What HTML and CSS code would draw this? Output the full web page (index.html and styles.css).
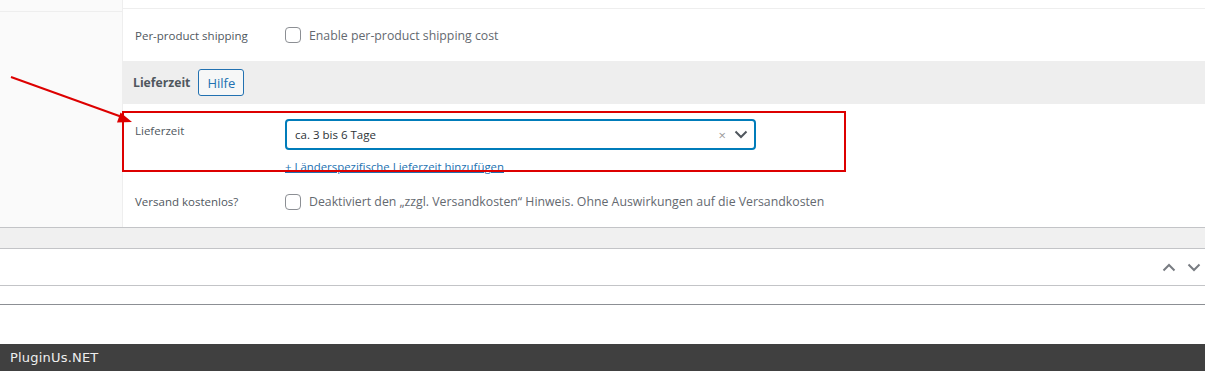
FILE: index.html
```html
<!DOCTYPE html>
<html lang="de">
<head>
<meta charset="utf-8">
<title>Lieferzeit</title>
<link rel="stylesheet" href="styles.css">
</head>
<body>
<div class="page">
  <div class="panel">
    <div class="tabs">
      <div class="tab-item"></div>
    </div>
    <div class="content">
      <div class="top-strip"></div>
      <div class="row row-ship">
        <div class="label">Per-product shipping</div>
        <div class="field">
          <label class="check"><span class="box"></span><span class="desc">Enable per-product shipping cost</span></label>
        </div>
      </div>
      <div class="section-head">
        <span class="section-title">Lieferzeit</span>
        <span class="help-btn">Hilfe</span>
      </div>
      <div class="row row-delivery">
        <div class="label label-top">Lieferzeit</div>
        <div class="field field-col">
          <div class="select">
            <span class="select-value">ca. 3 bis 6 Tage</span>
            <span class="select-clear">×</span>
            <svg class="select-arrow" width="14" height="9" viewBox="0 0 14 9"><path d="M1.5 1.5 L7 7 L12.5 1.5" fill="none" stroke="#50575e" stroke-width="2"/></svg>
          </div>
          <a class="add-link" href="#">+ Länderspezifische Lieferzeit hinzufügen</a>
        </div>
      </div>
      <div class="row row-free">
        <div class="label">Versand kostenlos?</div>
        <div class="field">
          <label class="check"><span class="box"></span><span class="desc">Deaktiviert den „zzgl. Versandkosten“ Hinweis. Ohne Auswirkungen auf die Versandkosten</span></label>
        </div>
      </div>
    </div>
  </div>
  <div class="gray-band"></div>
  <div class="postbox-head">
    <svg class="handle" width="14" height="9" viewBox="0 0 14 9"><path d="M1.5 7.5 L7 2 L12.5 7.5" fill="none" stroke="#787c82" stroke-width="2"/></svg>
    <svg class="handle" width="14" height="9" viewBox="0 0 14 9"><path d="M1.5 1.5 L7 7 L12.5 1.5" fill="none" stroke="#787c82" stroke-width="2"/></svg>
  </div>
  <div class="thin-row"></div>
  <div class="spacer"></div>
  <div class="footer">PluginUs.NET</div>

  <div class="highlight"></div>
  <svg class="arrow" width="140" height="130" viewBox="0 0 140 130">
    <line x1="11" y1="77" x2="122" y2="117" stroke="#dd0000" stroke-width="2"/>
    <polygon points="132,122 120.5,112.5 117,122.5" fill="#dd0000"/>
  </svg>
</div>
</body>
</html>
```

FILE: styles.css
```css
* { box-sizing: border-box; }
html, body { margin: 0; padding: 0; background: #fff; }
body {
  font-family: "Open Sans", "Noto Sans", sans-serif;
  font-size: 13px;
  color: #50575e;
}
.page { position: relative; width: 1205px; height: 371px; overflow: hidden; }

.panel {
  display: flex;
  height: 228px;
  border-bottom: 1px solid #c3c4c7;
}
.tabs {
  width: 123px;
  background: #fafafa;
  border-right: 1px solid #eee;
}
.tab-item { height: 12px; border-bottom: 1px solid #eee; }
.content { flex: 1; display: flex; flex-direction: column; }
.top-strip { height: 9px; border-bottom: 1px solid #eee; }

.row { display: flex; padding: 0 12px; }
.label { width: 150px; flex: none; color: #50575e; font-size: 11.5px; }
.field { flex: 1; }

.row-ship { height: 52px; align-items: center; }
.row-free { height: 51px; align-items: center; }

.check { display: flex; align-items: center; gap: 8px; }
.box {
  width: 16px; height: 16px;
  border: 1px solid #8c8f94;
  border-radius: 4px;
  background: #fff;
  flex: none;
}
.desc { color: #646970; font-size: 12.3px; }

.section-head {
  height: 43px;
  background: #eeeeee;
  display: flex;
  align-items: center;
  padding-left: 10px;
  gap: 8px;
}
.section-title { font-weight: 700; color: #50575e; font-size: 12.2px; }
.help-btn {
  height: 27px;
  padding: 0 8px;
  border: 1px solid #2271b1;
  border-radius: 3px;
  background: #f6f7f7;
  color: #2271b1;
  display: flex;
  align-items: center;
}

.row-delivery { padding-top: 15px; }
.label-top { padding-top: 2px; line-height: 20px; }
.field-col { display: flex; flex-direction: column; align-items: flex-start; }
.select {
  width: 471px;
  height: 31px;
  border: 2px solid #007cba;
  border-radius: 4px;
  display: flex;
  align-items: center;
  padding: 0 6px 0 8px;
  color: #2c3338;
  font-size: 11.5px;
}
.select-value { flex: 1; }
.select-clear { color: #999; font-size: 13px; margin-right: 8px; }
.select-arrow { display: block; }
.add-link {
  margin-top: 8px;
  line-height: 18px;
  color: #2271b1;
  text-decoration: underline;
  font-size: 11.4px;
}

.gray-band {
  height: 21px;
  background: #f0f0f0;
  border-bottom: 1px solid #c3c4c7;
}
.postbox-head {
  height: 37px;
  border-bottom: 1px solid #c3c4c7;
  display: flex;
  justify-content: flex-end;
  align-items: center;
  gap: 11px;
  padding-right: 4px;
}
.handle { display: block; }
.thin-row { height: 19px; border-bottom: 1px solid #8c8f94; }
.spacer { height: 39px; }
.footer {
  height: 28px;
  background: #404040;
  color: #eeeeee;
  font-family: "DejaVu Sans", sans-serif;
  font-size: 13px;
  letter-spacing: 0.2px;
  line-height: 28px;
  padding-left: 10px;
}

.highlight {
  position: absolute;
  left: 122px; top: 111px;
  width: 724px; height: 61px;
  border: 2px solid #dd0000;
}
.arrow { position: absolute; left: 0; top: 0; }
```
